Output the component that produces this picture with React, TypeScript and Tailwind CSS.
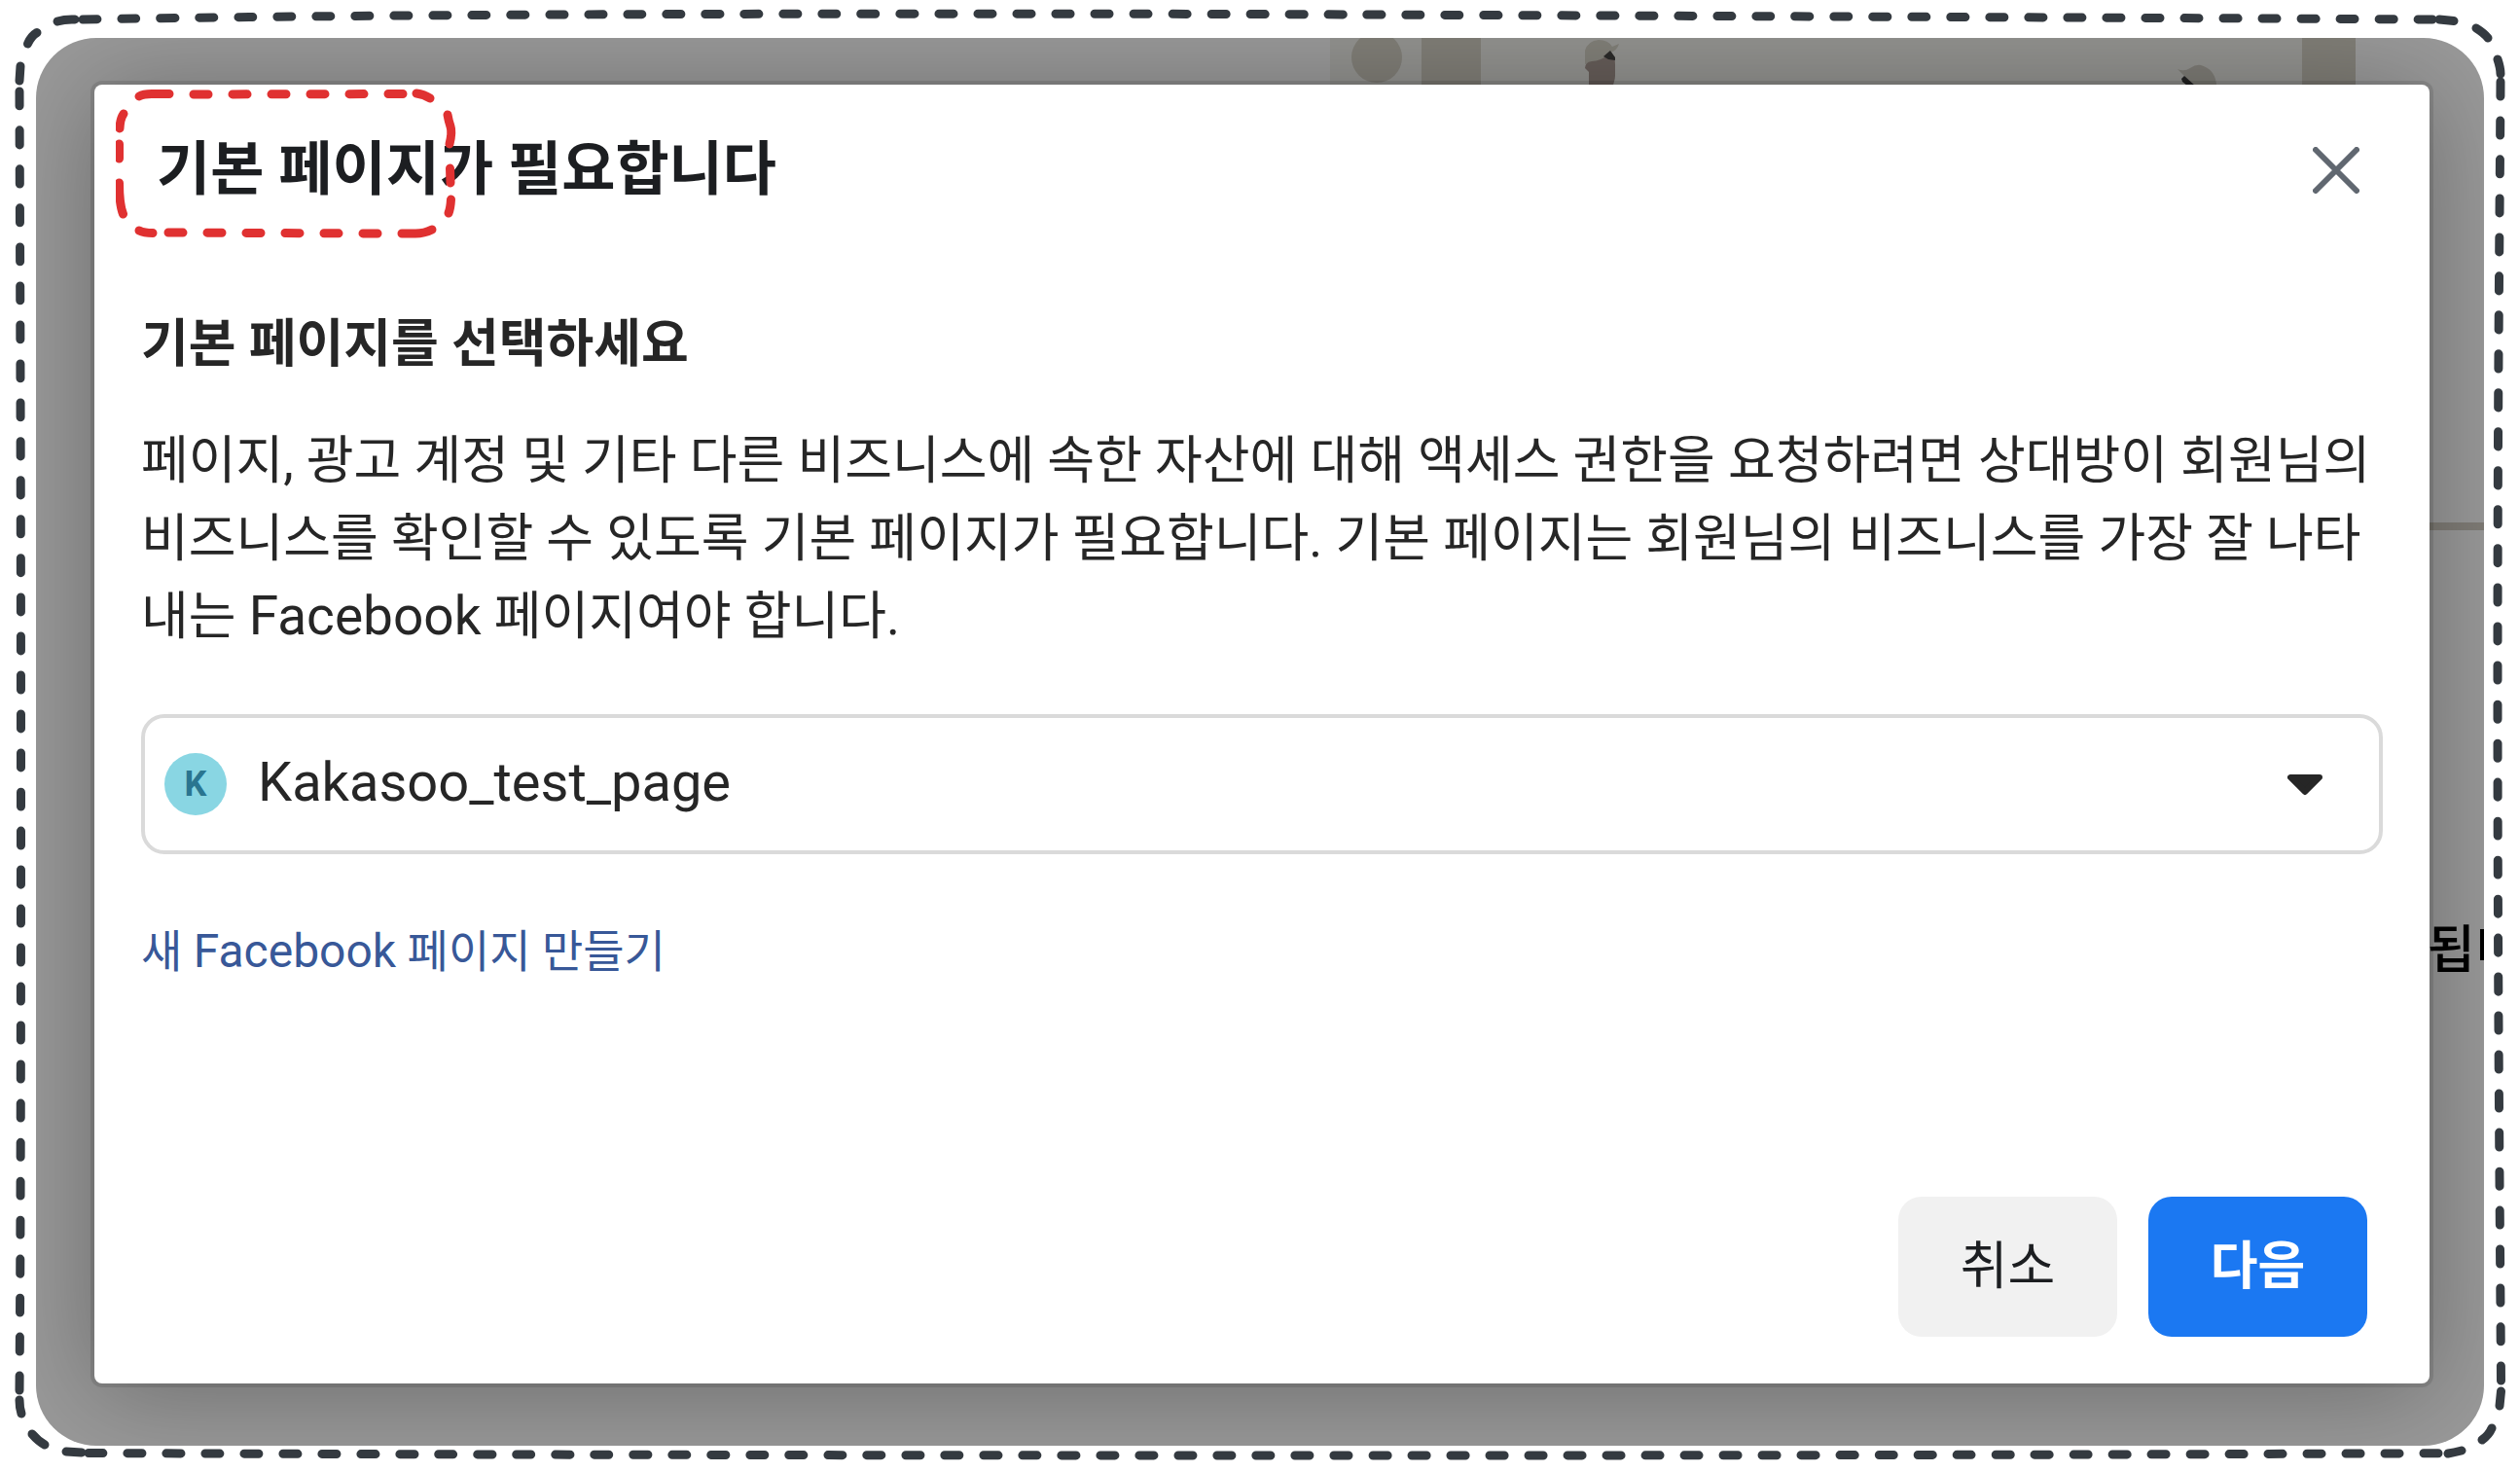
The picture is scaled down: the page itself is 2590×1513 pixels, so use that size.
import { type ReactNode } from 'react';

const pages = ['Kakasoo_test_page'];

function DashedFrame() {
    return (
        <svg
            className="pointer-events-none absolute inset-0 size-full text-[#343a40]"
            viewBox="0 0 2590 1513"
            preserveAspectRatio="none"
            fill="none"
            stroke="currentColor"
            strokeWidth="9"
            strokeLinecap="round"
            aria-hidden="true"
        >
            <g strokeDasharray="15 25">
                <path d="M85 20C180 18 420 15.500 650 14.700S1200 14 1400 15S2100 17.500 2500 20" />
                <path d="M2570 84C2569 250 2567 400 2567 700S2569 1200 2570.500 1420" />
                <path d="M91 1493.500C400 1495 900 1496 1400 1496S2200 1495 2508 1493.700" />
                <path d="M20 94C20.500 250 21.500 450 21.500 800S21 1300 20 1430" />
            </g>
            <path d="M2507 20L2522 21.500M2545 29Q2553 34 2557 39M2567 61Q2570 70 2570 76" />
            <path d="M2570.500 1430L2569 1445M2561 1468Q2558 1475 2551 1480M2530 1491Q2522 1493 2516 1494" />
            <path d="M68 1492L84 1493M33 1474Q39 1481 46 1485M20 1439Q20 1447 22 1453" />
            <path d="M21 68L20 83M28.500 45Q32 37 38 33.500M59 22Q67 19.500 77 20" />
        </svg>
    );
}

function TitleHighlight() {
    return (
        <svg
            className="pointer-events-none absolute -left-[42px] -top-11 h-[156px] w-[354px] text-[#e03131]"
            viewBox="120 91 354 156"
            fill="none"
            stroke="currentColor"
            strokeWidth="9"
            strokeLinecap="round"
            aria-hidden="true"
        >
            <path d="M144 99Q149 96 160 96.500H175" />
            <path d="M200 97L417 96.500" strokeDasharray="15 25" />
            <path d="M429 96Q437 97 443 101" />
            <path d="M461 118Q462 124 464 130T463 148M463.500 173L464 188M464.500 205Q464 214 462 219" />
            <path d="M445 236Q437 240 428 240H414" />
            <path d="M389 240L172 239" strokeDasharray="15 25" />
            <path d="M144 237Q149 239.500 158 239.500" />
            <path d="M128 117Q124.500 122 124 132M123.500 148V163M123.500 188Q123.500 210 127.500 220" />
        </svg>
    );
}

/* Dimmed page that shows round the dialog */
function Backdrop() {
    return (
        <div className="pointer-events-none absolute inset-0" aria-hidden="true">
            <svg className="absolute right-[132px] top-0 h-14 w-[1054px]" viewBox="1367 39 1054 56">
                <path fill="#92928f" d="M1367 39h1054v56H1367z" />
                <circle cx="1415" cy="59" r="26" fill="#807e77" />
                <path fill="#807e77" d="M1461 39h61v56h-61zM2366 39h55v56h-55z" />
                <path fill="#817f78" d="M1629 66V52Q1632 42 1643 41Q1653 41 1657 48L1664 45Q1662 52 1655 54L1645 62Z" />
                <path fill="#665d59" d="M1633 95V74L1629 70Q1629 64 1636 63Q1645 63 1653 56Q1660 56 1660 66V78Q1660 83 1655 95Z" />
                <path fill="#2b2a29" d="M1648 58L1655 52L1660 59V62L1653 61Z" />
                <path fill="#7d7b75" d="M2238 71Q2245 74 2251 70Q2257 66 2262 67Q2276 71 2278 86V95H2256L2245 78Z" />
                <path fill="#222" d="M2242 81L2245 78L2256 88H2248L2243 84Z" />
            </svg>
            <div className="absolute right-0 top-[498px] h-2 w-16 bg-[#7f7c76]" />
            <p className="absolute left-[calc(100%-58px)] top-[898px] whitespace-nowrap text-[53px] font-medium leading-[80px] text-black">됩니다</p>
        </div>
    );
}

interface FooterButtonProps {
    children: ReactNode;
    primary?: boolean;
}

function FooterButton({ children, primary }: FooterButtonProps) {
    return (
        <button
            type="button"
            className={`h-36 w-[225px] rounded-3xl text-[53px] leading-[80px] ${primary ? 'bg-[#1b78f2] font-bold text-white' : 'bg-[#f1f1f1] text-[#1c1e21]'}`}
        >
            {children}
        </button>
    );
}

export default function App() {
    return (
        <div className="relative flex min-h-screen bg-white px-[37px] pb-[27px] pt-[39px] font-['Roboto','Noto_Sans_CJK_KR',sans-serif] text-[#262626]">
            <div className="relative flex flex-1 overflow-hidden rounded-[62px] bg-[#999] pb-16 pl-[60px] pr-14 pt-12">
                <Backdrop />
                <div
                    role="dialog"
                    aria-labelledby="dialog-title"
                    className="relative flex flex-1 flex-col rounded-lg bg-white pb-12 pt-12 shadow-[0_0_0_4px_rgba(0,0,0,0.1),0_8px_104px_rgba(0,0,0,0.3)]"
                >
                    <header className="flex items-center justify-between px-16">
                        <div className="relative">
                            <h2 id="dialog-title" className="text-[60px] font-bold leading-[80px] text-[#1c1e21]">
                                기본 페이지가 필요합니다
                            </h2>
                            <TitleHighlight />
                        </div>
                        <button type="button" aria-label="닫기" className="p-2 text-[#606770]">
                            <svg className="size-12" viewBox="0 0 48 48" fill="none" stroke="currentColor" strokeWidth="6" strokeLinecap="round">
                                <path d="M3 3l42 42M45 3L3 45" />
                            </svg>
                        </button>
                    </header>

                    <main className="flex flex-col px-12 pt-[99px]">
                        <label htmlFor="primary-page" className="text-[53px] font-bold leading-[80px]">
                            기본 페이지를 선택하세요
                        </label>
                        <p className="mt-10 text-[53px] leading-[80px]">
                            페이지, 광고 계정 및 기타 다른 비즈니스에 속한 자산에 대해 액세스 권한을 요청하려면 상대방이 회원님의 비즈니스를 확인할 수 있도록 기본 페이지가 필요합니다. 기본 페이지는 회원님의 비즈니스를 가장 잘 나타내는{' '}
                            <span className="text-[55px] leading-none">Facebook</span> 페이지여야 합니다.
                        </p>
                        <div className="mt-[60px] flex h-36 items-center rounded-3xl border-4 border-[#dadada] pl-5 pr-[58px]">
                            <span className="flex size-16 items-center justify-center rounded-full bg-[#89d6e3] text-4xl font-bold text-[#2a7590]">K</span>
                            <select id="primary-page" className="h-full flex-1 appearance-none bg-transparent pb-1 pl-8 text-[56px]">
                                {pages.map((page) => (
                                    <option key={page}>{page}</option>
                                ))}
                            </select>
                            <svg className="h-6 w-9" viewBox="0 0 36 24" fill="currentColor" stroke="currentColor" strokeWidth="6" strokeLinejoin="round" aria-hidden="true">
                                <path d="M3 5h30L18 20z" />
                            </svg>
                        </div>
                        <a href="#" className="mt-[60px] self-start text-[46px] leading-[80px] text-[#385898]">
                            새 <span className="text-[48px] leading-none">Facebook</span> 페이지 만들기
                        </a>
                    </main>

                    <footer className="mt-auto flex justify-end gap-8 px-16">
                        <FooterButton>취소</FooterButton>
                        <FooterButton primary>다음</FooterButton>
                    </footer>
                </div>
            </div>
            <DashedFrame />
        </div>
    );
}
